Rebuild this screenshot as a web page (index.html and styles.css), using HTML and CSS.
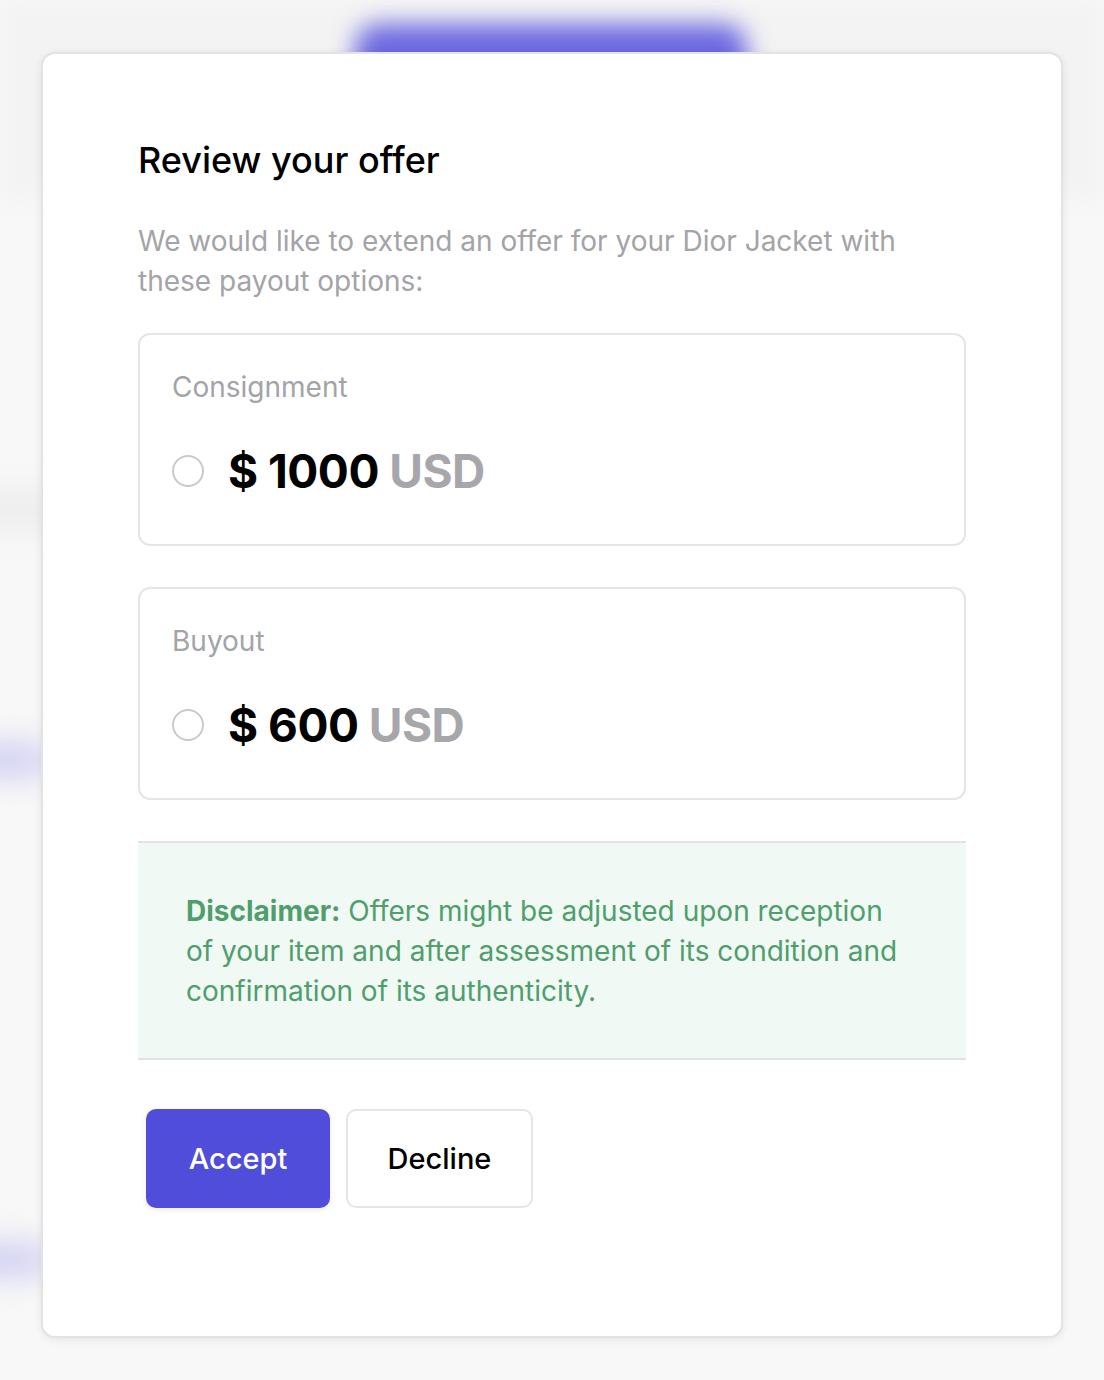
FILE: index.html
```html
<!DOCTYPE html>
<html lang="en">
<head>
<meta charset="utf-8">
<title>Review your offer</title>
<link rel="stylesheet" href="styles.css">
</head>
<body>
<div class="backdrop" aria-hidden="true">
  <div class="bd-band"></div>
  <div class="bd-button"></div>
  <div class="bd-spot bd-spot-1"></div>
  <div class="bd-spot bd-spot-2"></div>
  <div class="bd-grey bd-grey-1"></div>
</div>
<main class="modal">
  <h1 class="title">Review your offer</h1>
  <p class="subtitle">We would like to extend an offer for your Dior Jacket with these payout options:</p>
  <label class="option">
    <span class="option-label">Consignment</span>
    <span class="option-row">
      <span class="radio"></span>
      <span class="price">$ 1000 <span class="currency">USD</span></span>
    </span>
  </label>
  <label class="option">
    <span class="option-label">Buyout</span>
    <span class="option-row">
      <span class="radio"></span>
      <span class="price">$ 600 <span class="currency">USD</span></span>
    </span>
  </label>
  <div class="disclaimer">
    <p><strong>Disclaimer:</strong> Offers might be adjusted upon reception of your item and after assessment of its condition and confirmation of its authenticity.</p>
  </div>
  <div class="actions">
    <button class="btn btn-primary">Accept</button>
    <button class="btn btn-secondary">Decline</button>
  </div>
</main>
</body>
</html>
```
FILE: styles.css
```css
* { box-sizing: border-box; }
html, body { margin: 0; padding: 0; }
body {
  font-family: Inter, "Noto Sans", sans-serif;
  background: #f8f8f8;
  width: 1104px;
  min-height: 1380px;
  padding: 52px 41px 0;
  position: relative;
  overflow: hidden;
}
.backdrop {
  position: absolute;
  inset: 0;
  z-index: 0;
  overflow: hidden;
}
.bd-band {
  position: absolute;
  left: 0; right: 0; top: 0;
  height: 200px;
  background: #f3f3f3;
  filter: blur(10px);
}
.bd-button {
  position: absolute;
  left: 355px; top: 24px;
  width: 392px; height: 70px;
  border-radius: 24px;
  background: #6d68e0;
  filter: blur(12px);
}
.bd-spot {
  position: absolute;
  left: -60px;
  width: 110px; height: 40px;
  background: #d6d5f3;
  border-radius: 20px;
  filter: blur(14px);
}
.bd-spot-1 { top: 740px; }
.bd-spot-2 { top: 1240px; }
.bd-grey {
  position: absolute;
  left: -40px;
  width: 120px; height: 50px;
  background: #efefef;
  filter: blur(12px);
}
.bd-grey-1 { top: 485px; }

.modal {
  position: relative;
  z-index: 1;
  width: 1022px;
  height: 1286px;
  background: #fff;
  border: 2px solid #e3e3e3;
  border-radius: 14px;
  box-shadow: 0 2px 8px rgba(0,0,0,0.08);
  padding: 84px 95px 0;
}
.title {
  margin: 0;
  font-size: 36px;
  line-height: 44px;
  font-weight: 500;
  color: #000;
}
.subtitle {
  margin: 39px 0 32px;
  font-size: 28px;
  line-height: 40px;
  color: #a3a3a8;
}
.option {
  display: flex;
  flex-direction: column;
  border: 2px solid #e5e5e5;
  border-radius: 12px;
  padding: 32px 32px 45px;
  margin-bottom: 41px;
  cursor: pointer;
}
.option-label {
  font-size: 28px;
  line-height: 40px;
  color: #a3a3a8;
}
.option-row {
  display: flex;
  align-items: center;
  gap: 24px;
  margin-top: 36px;
  height: 56px;
}
.radio {
  width: 32px; height: 32px;
  border-radius: 50%;
  border: 2px solid #cacaca;
  background: #fff;
  flex: none;
}
.price {
  font-size: 46px;
  line-height: 56px;
  font-weight: 700;
  letter-spacing: -0.5px;
  color: #000;
}
.currency { color: #a7a7ab; }

.disclaimer {
  background: #f0f9f4;
  border-top: 2px solid #e3e3e3;
  border-bottom: 2px solid #e3e3e3;
  padding: 48px 60px 47px 48px;
}
.disclaimer p {
  margin: 0;
  font-size: 28px;
  line-height: 40px;
  color: #4f9e6c;
}
.disclaimer strong { font-weight: 700; }

.actions {
  display: flex;
  gap: 16px;
  margin: 49px 8px 0;
}
.btn {
  font-family: inherit;
  height: 99px;
  border-radius: 10px;
  font-size: 29px;
  font-weight: 500;
  cursor: pointer;
}
.btn-primary {
  width: 184px;
  background: #4f4dd9;
  color: #fff;
  border: none;
  box-shadow: 0 2px 6px rgba(0,0,0,0.08);
}
.btn-secondary {
  width: 187px;
  background: #fff;
  color: #000;
  border: 2px solid #e5e5e5;
}
```
